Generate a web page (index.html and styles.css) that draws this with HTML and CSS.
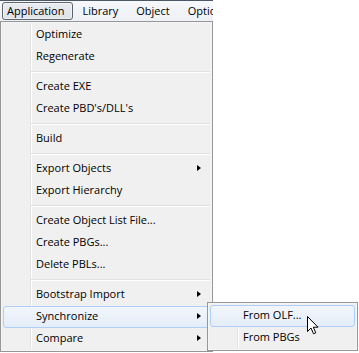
FILE: index.html
```html
<!DOCTYPE html>
<html>
<head>
<meta charset="utf-8">
<link rel="stylesheet" href="styles.css">
</head>
<body>
<div class="screen">
  <div class="menubar">
    <div class="mb-item active">Application</div>
    <div class="mb-item">Library</div>
    <div class="mb-item">Object</div>
    <div class="mb-item">Options</div>
  </div>

  <div class="menu main">
    <div class="gutter"></div>
    <div class="item">Optimize</div>
    <div class="item">Regenerate</div>
    <div class="sep"></div>
    <div class="item">Create EXE</div>
    <div class="item">Create PBD's/DLL's</div>
    <div class="sep"></div>
    <div class="item">Build</div>
    <div class="sep"></div>
    <div class="item sub">Export Objects<span class="arrow"></span></div>
    <div class="item">Export Hierarchy</div>
    <div class="sep"></div>
    <div class="item">Create Object List File...</div>
    <div class="item">Create PBGs...</div>
    <div class="item">Delete PBLs...</div>
    <div class="sep"></div>
    <div class="item sub">Bootstrap Import<span class="arrow"></span></div>
    <div class="item sub hot">Synchronize<span class="arrow"></span></div>
    <div class="item sub">Compare<span class="arrow"></span></div>
  </div>

  <div class="menu submenu">
    <div class="gutter"></div>
    <div class="item hot">From OLF...</div>
    <div class="item">From PBGs</div>
  </div>

  <svg class="cursor" width="12" height="19" viewBox="0 0 12 19">
    <path d="M0.5 0.5 L0.5 15.5 L4 12 L6.5 17.8 L8.8 16.8 L6.3 11.2 L11 11.2 Z" fill="#fff" stroke="#000" stroke-width="1" stroke-linejoin="miter"/>
  </svg>
</div>
</body>
</html>
```
FILE: styles.css
```css
html, body {
  margin: 0;
  padding: 0;
  background: #ffffff;
}
.screen {
  position: relative;
  width: 359px;
  height: 353px;
  overflow: hidden;
  font-family: "Open Sans", "Noto Sans", sans-serif;
  font-size: 11px;
  color: #000;
}
.menubar {
  width: 213px;
  height: 21px;
  display: flex;
  align-items: center;
  overflow: hidden;
  white-space: nowrap;
  background: linear-gradient(#f6f8fb, #edf0f4);
  border-top: 1px solid #4d5866;
  box-sizing: border-box;
  padding-left: 2px;
  gap: 0;
}
.mb-item {
  flex: none;
  height: 18px;
  line-height: 16px;
  padding: 0 8px;
  box-sizing: border-box;
  border: 1px solid transparent;
}
.mb-item.active {
  padding: 0 8px 0 4px;
  border: 1px solid #5e646b;
  border-radius: 3px;
  background: linear-gradient(#e9ecf0, #dfe3e8);
  box-shadow: inset 0 0 0 1px rgba(255,255,255,0.5);
}
.menu {
  position: absolute;
  background: #f0f0f0;
  border: 1px solid #979797;
  box-sizing: border-box;
  padding: 2px;
  box-shadow: inset 0 0 0 1px #f5f5f5;
}
.menu.main {
  left: 0;
  top: 21px;
  width: 213px;
  height: 331px;
}
.menu.submenu {
  left: 207px;
  top: 302px;
  width: 151px;
  height: 49px;
  z-index: 2;
}
.gutter {
  position: absolute;
  top: 2px;
  bottom: 2px;
  left: 29px;
  width: 1px;
  background: #e2e3e3;
  border-right: 1px solid #ffffff;
}
.item {
  position: relative;
  height: 22px;
  line-height: 18px;
  padding-left: 32px;
  box-sizing: border-box;
  white-space: nowrap;
  border: 1px solid transparent;
  border-radius: 3px;
}
.item.hot {
  border-color: #aecff7;
  background: linear-gradient(#f2f6fb, #e4edf8);
}
.arrow {
  position: absolute;
  right: 8px;
  top: 6px;
  width: 0;
  height: 0;
  border-top: 3.5px solid transparent;
  border-bottom: 3.5px solid transparent;
  border-left: 4px solid #000;
}
.sep {
  height: 8px;
  margin-left: 28px;
  position: relative;
}
.sep::before {
  content: "";
  position: absolute;
  left: 0;
  right: 0;
  top: 3px;
  height: 1px;
  background: #e0e0e0;
  border-bottom: 1px solid #ffffff;
}
.cursor {
  position: absolute;
  left: 307px;
  top: 316px;
  z-index: 3;
}
```
